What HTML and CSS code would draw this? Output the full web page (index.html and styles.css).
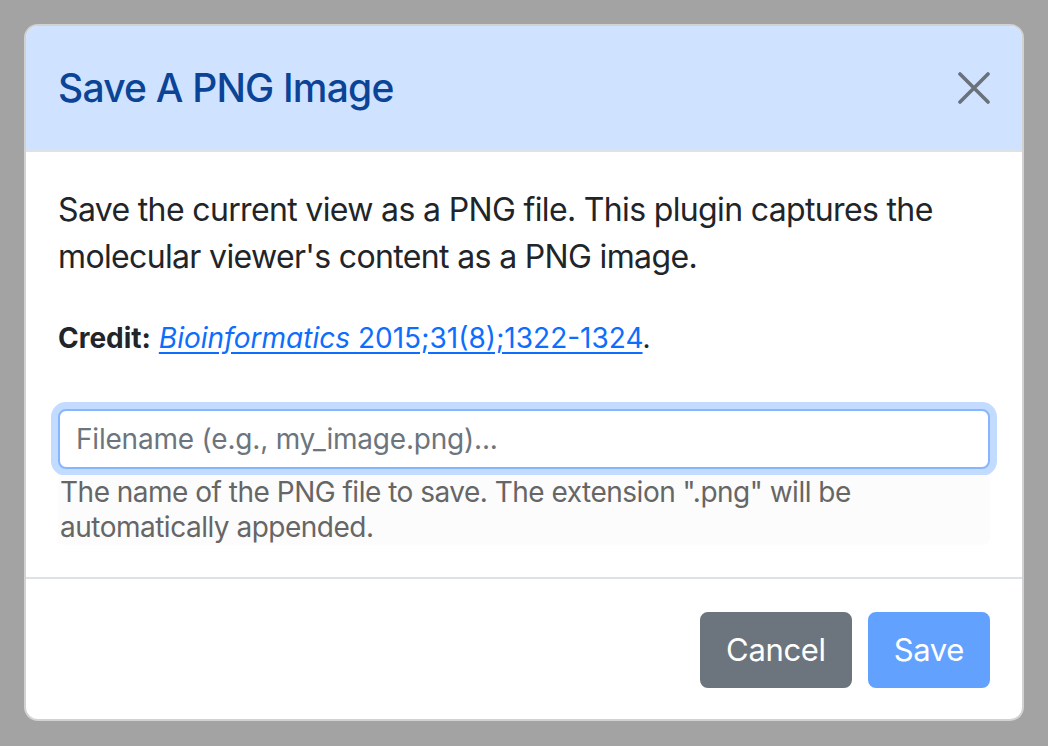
FILE: index.html
```html
<!DOCTYPE html>
<html lang="en">
<head>
<meta charset="utf-8">
<title>Save A PNG Image</title>
<link rel="stylesheet" href="styles.css">
</head>
<body>
<div class="modal">
  <div class="modal-header">
    <h5 class="modal-title">Save A PNG Image</h5>
    <button class="btn-close" aria-label="Close">
      <svg viewBox="0 0 32 32" width="32" height="32"><path d="M2 2L30 30M30 2L2 30" stroke="currentColor" stroke-width="3.6" stroke-linecap="round" fill="none"/></svg>
    </button>
  </div>
  <div class="modal-body">
    <p class="intro">Save the current view as a PNG file. This plugin captures the molecular viewer's content as a PNG image.</p>
    <p class="credit"><b>Credit:</b> <a href="#"><i>Bioinformatics</i> 2015;31(8);1322-1324</a>.</p>
    <div class="field">
      <input class="form-control" type="text" placeholder="Filename (e.g., my_image.png)...">
      <div class="form-text">The name of the PNG file to save. The extension ".png" will be automatically appended.</div>
    </div>
  </div>
  <div class="modal-footer">
    <button class="btn btn-secondary">Cancel</button>
    <button class="btn btn-primary" disabled>Save</button>
  </div>
</div>
</body>
</html>
```
FILE: styles.css
```css
html, body {
  margin: 0;
  background: #a3a3a3;
}
body {
  padding: 24px;
  font-family: Inter, "Liberation Sans", sans-serif;
  color: #212529;
}
.modal {
  width: 1000px;
  box-sizing: border-box;
  background: #fff;
  border: 2px solid rgba(0, 0, 0, 0.175);
  border-radius: 14px;
  overflow: hidden;
}
.modal-header {
  height: 126px;
  box-sizing: border-box;
  background: #cfe2ff;
  border-bottom: 2px solid #dee2e6;
  padding: 0 32px;
  display: flex;
  align-items: center;
  justify-content: space-between;
}
.modal-title {
  margin: 0;
  font-size: 39px;
  font-weight: 500;
  line-height: 48px;
  letter-spacing: -0.8px;
  color: #0b4497;
}
.btn-close {
  background: none;
  border: 0;
  padding: 0;
  width: 32px;
  height: 32px;
  color: #6a717a;
  display: flex;
}
.modal-body {
  padding: 34px 32px 32px;
}
.intro {
  margin: 0 0 37px;
  font-size: 32px;
  line-height: 47px;
  letter-spacing: -0.65px;
}
.credit {
  margin: 0 0 50px;
  font-size: 28px;
  line-height: 42px;
}
.credit a {
  color: #0d6efd;
  text-decoration: underline;
  text-underline-offset: 4px;
}
.field {
  display: flex;
  flex-direction: column;
}
.form-control {
  display: block;
  width: 100%;
  box-sizing: border-box;
  height: 60px;
  padding: 0 16px;
  font-family: inherit;
  font-size: 28px;
  letter-spacing: -0.2px;
  color: #212529;
  background: #fff;
  border: 2px solid #86b7fe;
  border-radius: 8px;
  box-shadow: 0 0 0 7px rgba(13, 110, 253, 0.25);
  outline: none;
}
.form-control::placeholder {
  color: #6c757d;
  opacity: 1;
}
.form-text {
  margin-top: 6px;
  padding: 0 2px;
  font-size: 28px;
  line-height: 35px;
  letter-spacing: -0.5px;
  color: #666;
  background: #fcfcfc;
  border-radius: 6px;
}
.modal-footer {
  border-top: 2px solid #dee2e6;
  padding: 33px 32px 31px;
  display: flex;
  justify-content: flex-end;
  gap: 16px;
}
.btn {
  font-family: inherit;
  font-size: 31px;
  line-height: 48px;
  letter-spacing: -0.35px;
  padding: 12px 24px;
  border: 2px solid transparent;
  border-radius: 8px;
  color: #fff;
}
.btn-secondary {
  background: #6c757d;
  border-color: #6c757d;
}
.btn-primary {
  background: #62a2fe;
  border-color: #62a2fe;
}
```
